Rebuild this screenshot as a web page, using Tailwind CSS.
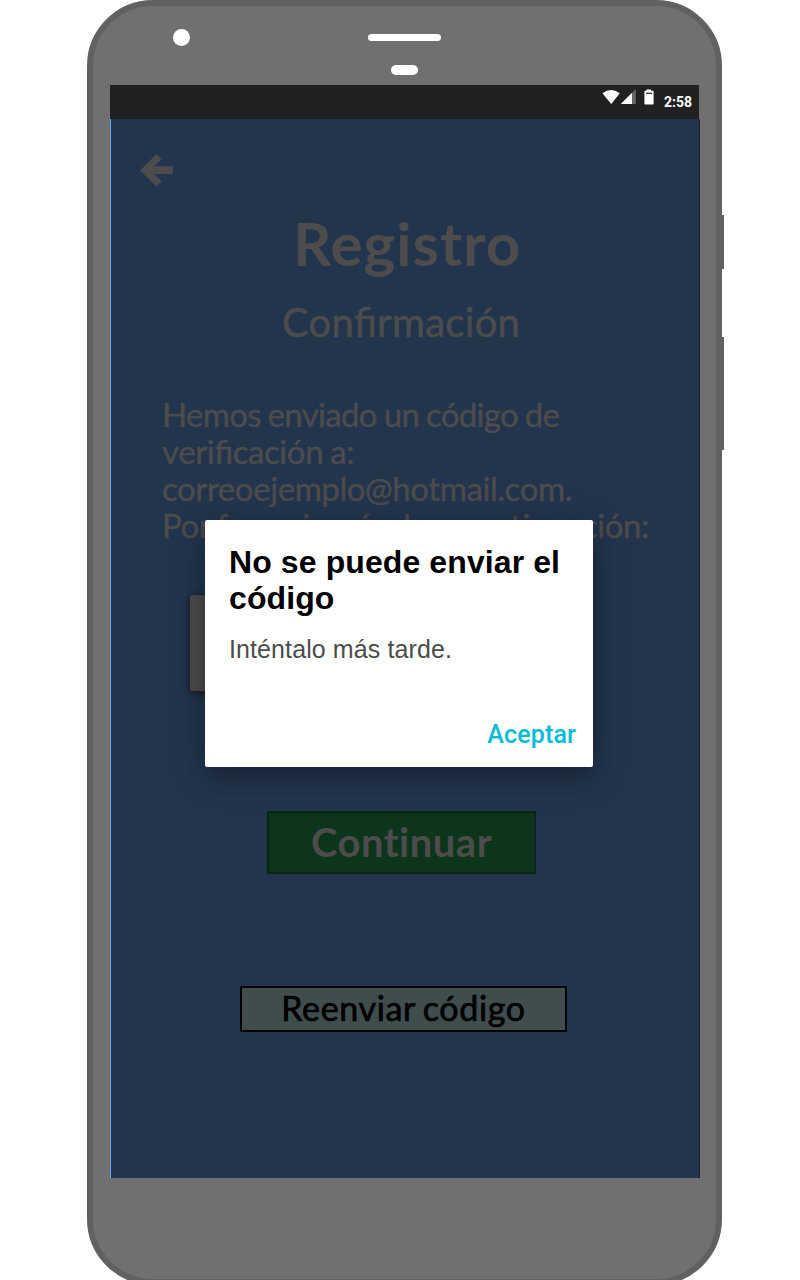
<!DOCTYPE html>
<html lang="es">
<head>
<meta charset="utf-8">
<title>Registro</title>
<script src="https://cdn.jsdelivr.net/npm/@tailwindcss/browser@4"></script>
</head>
<body class="h-[1280px] w-[800px] overflow-hidden bg-white">
<div class="relative ml-[87px] h-[1285px] w-[635px] rounded-[66px] border-6 border-[#616161] bg-[#707070]">
  <!-- side buttons -->
  <div class="absolute -right-[8px] top-[209px] h-[54px] w-[2px] bg-[#616161]"></div>
  <div class="absolute -right-[8px] top-[331px] h-[113px] w-[2px] bg-[#616161]"></div>
  <!-- camera, speaker, sensor -->
  <div class="absolute left-[80px] top-[23px] size-[17px] rounded-full bg-white"></div>
  <div class="flex h-[79px] flex-col items-center pt-[28px]">
    <div class="h-[7px] w-[73px] rounded-full bg-white"></div>
    <div class="mt-[24px] h-[10px] w-[27px] rounded-full bg-white"></div>
  </div>
  <main class="relative ml-[17px] h-[1093px] w-[590px]">
    <div class="flex h-[34px] w-[589px] justify-end bg-[#212121] pr-[7px] text-white">
      <svg class="mt-[4px] h-[16px] w-[54px]" viewBox="0 0 54 16" fill="none">
        <path d="M.5 4.300Q9-2.300 17.800 4.300L9.200 15Z" fill="#fff"/>
        <path d="M33.800 0V15H18.800Z" fill="#666"/>
        <path d="M30 3.800V15H18.800Z" fill="#fff"/>
        <path d="M44.500 0.500h4.500v1.300h1.600q1 0 1 1V14.500q0 1-1 1h-7.200q-1 0-1-1V2.800q0-1 1-1h1.100Z" fill="#fff"/>
        <path d="M44 4.300h6" stroke="#212121" stroke-width="1.200"/>
      </svg>
      <span class="ml-[8px] mt-[8px] font-['Roboto'] text-[14px] font-bold leading-[18px]">2:58</span>
    </div>
    <div class="flex h-[1059px] w-[590px] flex-col border-l border-r border-l-[#66a6ff] border-r-[#172335] bg-[#23354d] font-['Lato',sans-serif] text-[#4c4c4c]">
      <svg class="ml-[29px] mt-[35px] h-[33px] w-[33px] shrink-0" viewBox="0 0 33 33"><path d="M0 16.500 16.500 0 21.500 5 14.500 12.200H32.700V20H14.500L21.500 27.500 16.500 32.500Z" fill="#4c4c4c"/></svg>
      <h1 class="ml-[182px] mt-[20px] w-[240px] whitespace-nowrap text-[60px] font-bold leading-[72px] tracking-[1px]">Registro</h1>
      <h2 class="ml-[171px] mt-[19px] whitespace-nowrap text-[40px] leading-[48px] tracking-[0.3px] [font-feature-settings:'liga'_1] [-webkit-text-stroke:0.5px_#4c4c4c]">Confirmación</h2>
      <p class="ml-[51px] mt-[50px] whitespace-nowrap text-[33px] leading-[37px] tracking-[-0.42px] [word-spacing:-1px] [font-feature-settings:'liga'_1] [-webkit-text-stroke:0.4px_#4c4c4c]"><span class="tracking-[-0.68px]">Hemos enviado un código de</span><br>verificación a:<br>correoejemplo@hotmail.com.<br>Por favor, ingréselo a continuación:</p>
      <div class="ml-[79px] mt-[51px] h-[96px] w-[380px] shrink-0 rounded-[2px] bg-[#4c4c4c] shadow-[0_2px_8px_rgba(0,0,0,0.5)]"></div>
      <button class="ml-[156px] mt-[120px] h-[63px] w-[269px] shrink-0 rounded-[1px] border-2 border-[#0b2416] bg-[#0c351b] pb-px text-[40px] font-bold leading-[48px] tracking-[0.5px]">Continuar</button>
      <button class="ml-[129px] mt-[112px] h-[46px] w-[327px] shrink-0 rounded-[1px] border-2 border-black bg-[#3f4e4d] pb-[2px] text-[34px] leading-[40px] tracking-[0.65px] text-black [word-spacing:-2px] [-webkit-text-stroke:0.7px_black]">Reenviar código</button>
    </div>
    <!-- dialog over the dimmed screen -->
    <div role="dialog" class="absolute left-[95px] top-[435px] flex h-[247px] w-[388px] flex-col rounded-[2px] bg-white px-[24px] pt-[24px] shadow-[0_8px_38px_rgba(0,0,0,0.25),0_10px_20px_rgba(0,0,0,0.15)]">
      <h3 class="whitespace-nowrap font-['Liberation_Sans',sans-serif] text-[32px] font-bold leading-[36px] tracking-[0.1px] text-black">No se puede enviar el<br>código</h3>
      <p class="mt-[18px] whitespace-nowrap font-['Liberation_Sans',sans-serif] text-[25px] leading-[30px] tracking-[0.1px] text-[#4c4c4c]">Inténtalo más tarde.</p>
      <button class="-mr-[7px] mt-[56px] self-end font-['Roboto'] text-[25px] font-medium leading-[30px] tracking-[0.15px] text-[#00bcd4]">Aceptar</button>
    </div>
  </main>
</div>
</body>
</html>
